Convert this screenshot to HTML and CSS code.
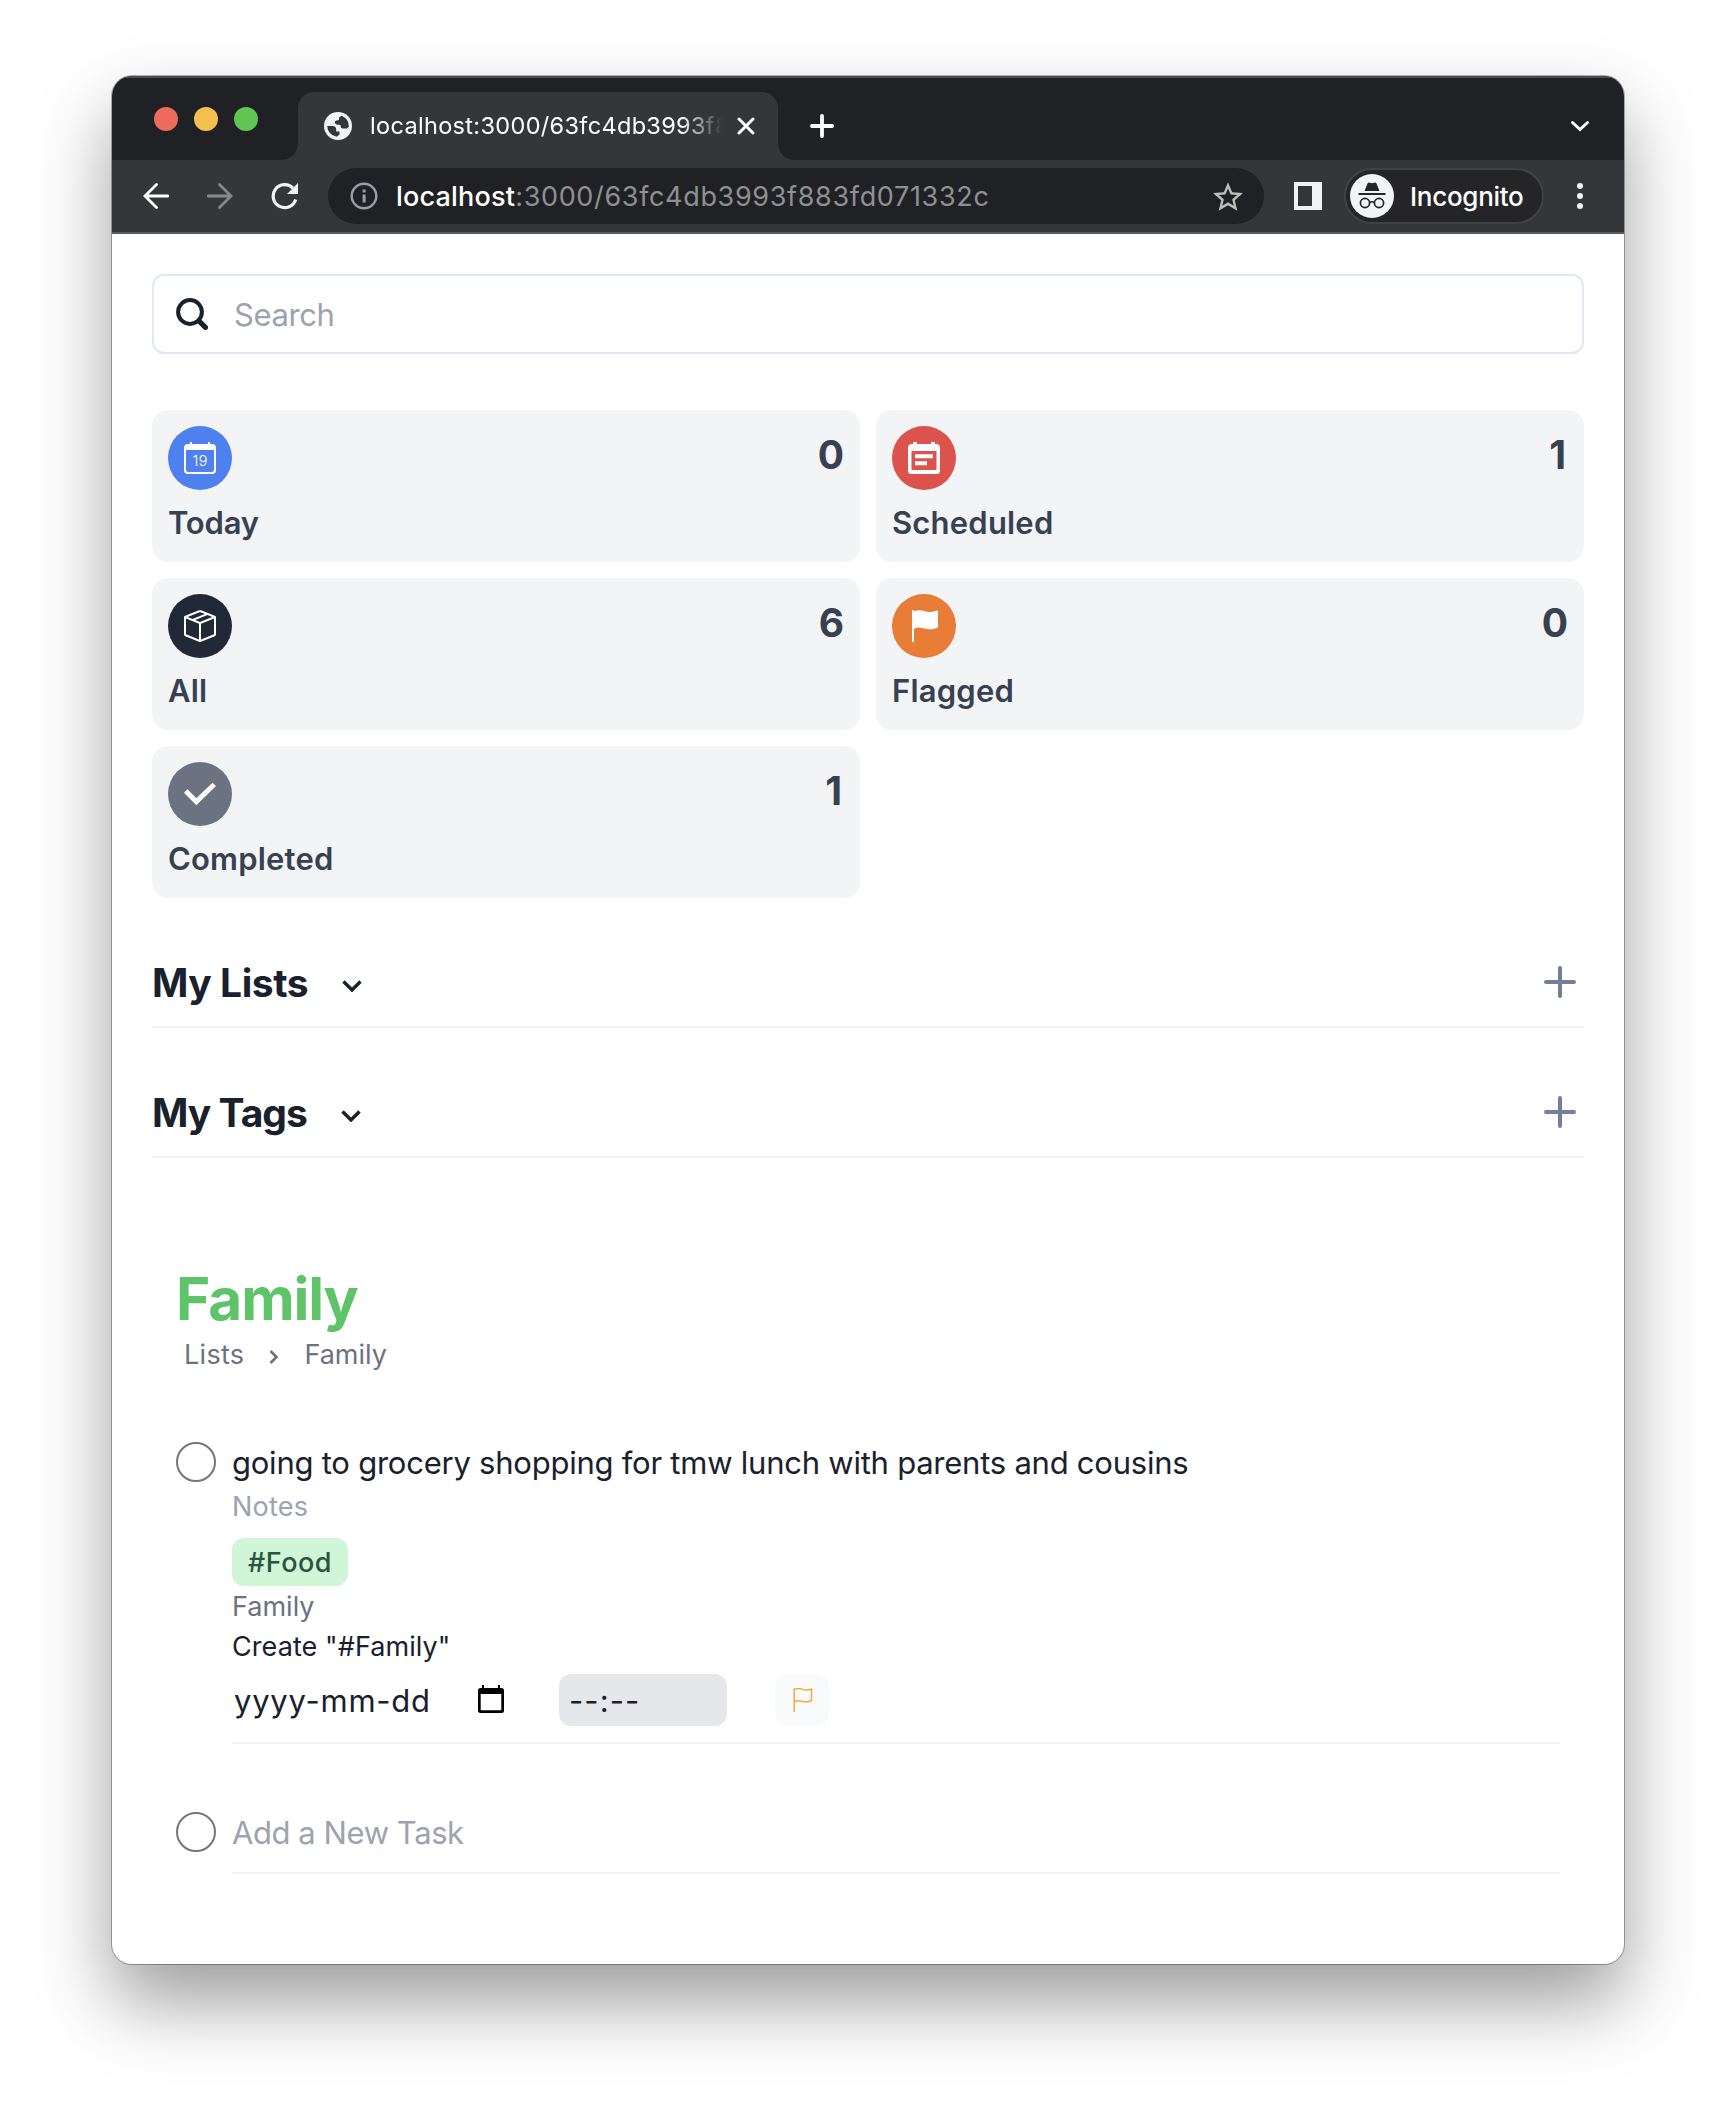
FILE: index.html
```html
<!DOCTYPE html>
<html lang="en">
<head>
<meta charset="utf-8">
<title>Reminders</title>
<link rel="stylesheet" href="styles.css">
</head>
<body>
<div class="window">
  <div class="tabstrip">
    <div class="lights"><i class="light red"></i><i class="light yellow"></i><i class="light green"></i></div>
    <div class="tab">
      <svg class="globe" viewBox="0 0 28 28"><circle cx="14" cy="14" r="14" fill="#f1f3f4"/><path fill="#35363a" d="M3.200 14H8.500Q12.200 14 12.200 17.500V19.500H15.500V22.500L12.500 24.700A10.900 10.900 0 0 1 3.200 14ZM17.500 3.700A10.900 10.900 0 0 1 24.800 15L22.500 16.500H19Q16.500 16.500 16.500 13L12.500 12.500Q10 11 11.500 8.800L15 8V5.500Z"/></svg>
      <div class="tab-title"><span>localhost:3000/63fc4db3993f8</span></div>
      <svg class="close" viewBox="0 0 18 18"><path d="M2 2l14 14M16 2L2 16"/></svg>
    </div>
    <svg class="newtab" viewBox="0 0 24 24"><path d="M12 2v20M2 12h20"/></svg>
    <svg class="tabmenu" viewBox="0 0 20 12"><path d="M2.500 2.500L10 9.500l7.500-7"/></svg>
  </div>
  <div class="toolbar">
    <svg class="nav back" viewBox="0 0 26 26"><path d="M25 13H2M13.500 1.500L2 13l11.500 11.500"/></svg>
    <svg class="nav forward" viewBox="0 0 26 26"><path d="M1 13h23M12.500 1.500L24 13 12.500 24.500"/></svg>
    <svg class="reload" viewBox="0 0 28 28"><path fill="none" stroke="#f1f3f4" stroke-width="3.200" d="M24.700 17.500A11.500 11.500 0 1 1 22 6.200"/><path fill="#f1f3f4" d="M27 1v11H16z"/></svg>
    <div class="omnibox">
      <svg class="info" viewBox="0 0 28 28"><circle cx="14" cy="14" r="12.300" fill="none" stroke="#9aa0a6" stroke-width="2.400"/><path fill="#9aa0a6" d="M12.600 7.500h3v3h-3zM12.600 12.500h3v8h-3z"/></svg>
      <div class="url"><span class="host">localhost</span><span class="path">:3000/63fc4db3993f883fd071332c</span></div>
      <svg class="star" viewBox="2 2 20 19"><path fill="#bdbdbd" d="M22 9.240l-7.190-.620L12 2 9.190 8.630 2 9.240l5.460 4.730L5.820 21 12 17.270 18.180 21l-1.630-7.030L22 9.240zM12 15.400l-3.760 2.270 1-4.280-3.320-2.880 4.380-.38L12 6.100l1.710 4.040 4.380.38-3.320 2.880 1 4.280L12 15.400z"/></svg>
    </div>
    <svg class="panel" viewBox="0 0 28 28"><path fill="#f1f3f4" fill-rule="evenodd" d="M0 0h28v28H0zM4 4v20h14V4z"/></svg>
    <div class="incognito">
      <svg class="avatar" viewBox="0 0 44 44"><circle cx="22" cy="22" r="22" fill="#f1f3f4"/><path fill="#252528" d="M14.500 17l3-7.500c.5-1 1.200-1.100 2-.8 1.600.6 3.400.6 5 0 .8-.3 1.500-.2 2 .8l3 7.500zM8.500 19h27v2h-27z"/><g fill="none" stroke="#252528" stroke-width="1.700"><circle cx="15" cy="29" r="4.600"/><circle cx="29" cy="29" r="4.600"/><path d="M19.500 28.500q2.500-1.500 5 0"/></g></svg>
      <span>Incognito</span>
    </div>
    <svg class="dots" viewBox="0 0 6 28"><circle cx="3" cy="4" r="3"/><circle cx="3" cy="14" r="3"/><circle cx="3" cy="24" r="3"/></svg>
  </div>
  <main class="page">
    <div class="search">
      <svg viewBox="0 0 32 32"><circle cx="14" cy="14" r="11.900" fill="none" stroke="#1a202c" stroke-width="4"/><path d="M23 23l6.400 6.400" stroke="#1a202c" stroke-width="5.200" stroke-linecap="round"/></svg>
      <span>Search</span>
    </div>
    <div class="cards">
      <div class="card">
        <div class="card-top"><div class="badge blue"><svg viewBox="0 0 32 32"><path fill="#fff" fill-rule="evenodd" d="M6 0h2v2h16V0h2v2h2a4 4 0 0 1 4 4v22a4 4 0 0 1-4 4H4a4 4 0 0 1-4-4V6a4 4 0 0 1 4-4h2zM2 8v19.500A2.500 2.500 0 0 0 4.500 30h23a2.500 2.500 0 0 0 2.500-2.500V8z"/><text x="16" y="23.500" text-anchor="middle" class="date-num">19</text></svg></div><span class="count">0</span></div>
        <div class="label today">Today</div>
      </div>
      <div class="card">
        <div class="card-top"><div class="badge red-bg"><svg viewBox="0 0 32 32"><path fill="#fff" fill-rule="evenodd" d="M5 0h4v2h14V0h4v2h1a4 4 0 0 1 4 4v22.500a3.500 3.500 0 0 1-3.500 3.500h-25A3.500 3.500 0 0 1 0 28.500V6a4 4 0 0 1 4-4h1zM3.500 9v19h25V9z"/><path fill="#fff" d="M7 12.300h18v4H7zM7 19.300h12v4H7z"/></svg></div><span class="count one">1</span></div>
        <div class="label">Scheduled</div>
      </div>
      <div class="card">
        <div class="card-top"><div class="badge dark"><svg viewBox="0 0 16 16"><path fill="#fff" d="M8.186 1.113a.5.5 0 0 0-.372 0L1.846 3.500l2.404.961L10.404 2l-2.218-.887zm3.564 1.426L5.596 5 8 5.961 14.154 3.500l-2.404-.961zm3.250 1.700-6.500 2.600v7.922l6.500-2.600V4.240zM7.500 14.762V6.838L1 4.239v7.923l6.500 2.600zM7.443.184a1.500 1.500 0 0 1 1.114 0l7.129 2.852A.5.5 0 0 1 16 3.500v8.662a1 1 0 0 1-.629.928l-7.185 2.874a.5.5 0 0 1-.372 0L.63 13.090a1 1 0 0 1-.63-.928V3.500a.5.5 0 0 1 .314-.464L7.443.184z"/></svg></div><span class="count">6</span></div>
        <div class="label">All</div>
      </div>
      <div class="card">
        <div class="card-top"><div class="badge orange"><svg viewBox="0 0 32 32"><path fill="#fff" d="M4 .2h2v1C10-.3 13-.1 17 1.300c4 1.400 8 .7 13-1.100v17.300c-4 2-9.500 2.500-14.500.8-3.500-1.200-6.500-.8-9.500.4V32H4z"/></svg></div><span class="count">0</span></div>
        <div class="label">Flagged</div>
      </div>
      <div class="card">
        <div class="card-top"><div class="badge gray"><svg viewBox="0 0 32 32"><path fill="#fff" d="M0 14.700l3.500-3.400 8.800 9L28.500 4.700 32 8 12.300 27.300z"/></svg></div><span class="count one">1</span></div>
        <div class="label">Completed</div>
      </div>
    </div>
    <section class="group">
      <h2>My Lists</h2>
      <svg class="chev" viewBox="0 0 20 12"><path d="M1.500 1.500L10 10l8.500-8.500"/></svg>
      <svg class="plus" viewBox="0 0 32 32"><path d="M16 2v28M2 16h28"/></svg>
    </section>
    <section class="group tags">
      <h2>My Tags</h2>
      <svg class="chev" viewBox="0 0 20 12"><path d="M1.500 1.500L10 10l8.500-8.500"/></svg>
      <svg class="plus" viewBox="0 0 32 32"><path d="M16 2v28M2 16h28"/></svg>
    </section>
    <div class="list">
      <h1>Family</h1>
      <nav class="crumbs"><span class="crumb-root">Lists</span><svg viewBox="0 0 10 14"><path d="M1.500 1l6 6-6 6"/></svg><span>Family</span></nav>
      <div class="task">
        <span class="radio"></span>
        <div class="task-body">
          <div class="task-title">going to grocery shopping for tmw lunch with parents and cousins</div>
          <div class="small muted notes">Notes</div>
          <div class="tag">#Food</div>
          <div class="small tag-input">Family</div>
          <div class="small create">Create "#Family"</div>
          <div class="when">
            <span class="date">yyyy-mm-dd</span>
            <svg class="cal" viewBox="0 0 26 28"><path fill-rule="evenodd" d="M4 0h2v3h14V0h2v3h1.500A2.500 2.500 0 0 1 26 5.500v20a2.500 2.500 0 0 1-2.500 2.500h-21A2.500 2.500 0 0 1 0 25.500v-20A2.500 2.500 0 0 1 2.500 3H4zM2.700 9v16.300h20.600V9z"/></svg>
            <span class="time">--:--</span>
            <span class="flag"><svg viewBox="0 0 20 24"><path fill="none" stroke="#f0ab3c" stroke-width="1.500" d="M1.200 24V1.200c3-1 5.500-.8 8.300.2s5.500.8 9-.4v11.500c-3 1.500-6 1.700-9.300.7-3-.9-5-.6-8 .3"/></svg></span>
          </div>
        </div>
      </div>
      <div class="task new">
        <span class="radio"></span>
        <div class="task-body"><div class="task-title placeholder muted">Add a New Task</div></div>
      </div>
    </div>
  </main>
</div>
</body>
</html>
```
FILE: styles.css
```css
* { box-sizing: border-box; }
html, body { margin: 0; }
body {
  width: 1736px;
  height: 2112px;
  padding: 76px 112px 148px;
  background: #fff;
  font-family: Inter, "Liberation Sans", sans-serif;
  color: #1a202c;
  overflow: hidden;
}
svg { display: block; flex: none; }
h1, h2 { margin: 0; }

.window {
  height: 1888px;
  display: flex;
  flex-direction: column;
  border-radius: 20px;
  overflow: hidden;
  background: #fff;
  box-shadow: 0 0 0 1px rgba(0, 0, 0, .3), 0 38px 76px rgba(0, 0, 0, .39);
}

/* Browser chrome */
.tabstrip {
  display: flex;
  align-items: center;
  height: 84px;
  padding: 14px 34px 0 42px;
  background: #202124;
  border-top: 2px solid #4b4c4f;
}
.lights { display: flex; gap: 16px; width: 144px; padding-bottom: 14px; }
.light { width: 24px; height: 24px; border-radius: 50%; }
.red { background: #ed6a5e; }
.yellow { background: #f5bf4f; }
.green { background: #61c554; }
.tab {
  position: relative;
  display: flex;
  align-items: center;
  width: 480px;
  height: 68px;
  padding: 0 23px 0 26px;
  border-radius: 16px 16px 0 0;
  background: #35363a;
}
.tab::before, .tab::after {
  content: "";
  position: absolute;
  bottom: 0;
  width: 16px;
  height: 16px;
}
.tab::before { left: -16px; background: radial-gradient(circle at 0 0, transparent 15.500px, #35363a 16px); }
.tab::after { right: -16px; background: radial-gradient(circle at 100% 0, transparent 15.500px, #35363a 16px); }
.globe { width: 28px; height: 28px; }
.tab-title {
  width: 362px;
  margin-left: 18px;
  white-space: nowrap;
  font-size: 23.500px;
  line-height: 34px;
  letter-spacing: .33px;
  color: #fff;
  -webkit-mask-image: linear-gradient(90deg, #000 310px, transparent 352px);
  mask-image: linear-gradient(90deg, #000 310px, transparent 352px);
}
.close { width: 18px; height: 18px; margin-left: auto; }
.close path, .newtab path, .tabmenu path { fill: none; stroke: #fff; stroke-width: 3; stroke-linecap: round; }
.newtab { width: 24px; height: 24px; margin-left: 32px; }
.newtab path { stroke-width: 3.800; }
.tabmenu { width: 20px; height: 12px; margin-left: auto; }
.toolbar {
  display: flex;
  align-items: center;
  height: 74px;
  padding: 0 41px 0 31px;
  background: #35363a;
  border-bottom: 2px solid #5a5b5f;
}
.nav { width: 26px; height: 26px; margin-right: 38px; }
.nav path { fill: none; stroke: #fff; stroke-width: 2.800; stroke-linecap: round; }
.forward path { stroke: #87888a; }
.reload { width: 28px; height: 28px; }
.omnibox {
  display: flex;
  align-items: center;
  width: 936px;
  height: 56px;
  margin-left: 29px;
  padding: 0 21px 0 22px;
  border-radius: 28px;
  background: #202124;
}
.info { width: 28px; height: 28px; }
.url { margin-left: 18px; padding-top: 1px; white-space: nowrap; font-size: 27px; line-height: 40px; color: #8e9093; letter-spacing: .66px; }
.host { color: #fff; font-weight: 450; letter-spacing: .2px; }
.star { width: 30px; height: 29px; margin-left: auto; }
.panel { width: 28px; height: 28px; margin-left: 30px; }
.incognito {
  display: flex;
  align-items: center;
  width: 200px;
  height: 56px;
  margin-left: 22px;
  padding-left: 4px;
  border: 2px solid #414246;
  border-radius: 28px;
  background: #252528;
  color: #fff;
  font-size: 26px;
  font-weight: 450;
  letter-spacing: -.28px;
}
.avatar { width: 44px; height: 44px; margin-right: 16px; }
.dots { width: 6px; height: 28px; margin-left: auto; fill: #f1f3f4; }

/* Page */
.page { flex: 1; padding: 40px; }
.search {
  display: flex;
  align-items: center;
  height: 80px;
  padding-left: 22px;
  border: 2px solid #e2e8f0;
  border-radius: 12px;
  color: #9ca3af;
  font-size: 31px;
  letter-spacing: -.4px;
}
.search svg { width: 32px; height: 32px; margin-right: 26px; }
.cards { display: grid; grid-template-columns: 1fr 1fr; gap: 16px; margin-top: 56px; }
.card { height: 152px; padding: 16px; border-radius: 16px; background: #f3f4f6; color: #374151; }
.card-top { display: flex; justify-content: space-between; height: 64px; }
.badge { display: flex; align-items: center; justify-content: center; width: 64px; height: 64px; border-radius: 50%; }
.badge svg { width: 32px; height: 32px; }
.blue { background: #4e80ee; }
.red-bg { background: #dc524d; }
.dark { background: #222936; }
.orange { background: #e87d37; }
.gray { background: #6b7280; }
.date-num { font-size: 15px; font-weight: 350; fill: #fff; }
.count { font-size: 39px; font-weight: 700; line-height: 58px; }
.count.one { margin-right: 2px; }
.label { margin-top: 8px; font-size: 31px; font-weight: 600; line-height: 50px; letter-spacing: .2px; }
.label.today { letter-spacing: -.2px; }
.group {
  display: flex;
  align-items: center;
  height: 130px;
  padding: 60px 8px 20px 0;
  border-bottom: 2px solid #edf2f7;
}
.group h2 { font-size: 39px; line-height: 48px; padding-top: 2px; font-weight: 700; letter-spacing: -.45px; }
.group.tags h2 { letter-spacing: -.98px; }
.chev { width: 20px; height: 12px; margin: 8px 0 0 34px; }
.chev path { fill: none; stroke: #1a202c; stroke-width: 3.400; }
.plus { width: 32px; height: 32px; margin-left: auto; }
.plus path { stroke: #718096; stroke-width: 4; stroke-linecap: round; }

.list { padding: 111px 24px 0; }
.list h1 { font-size: 58.500px; line-height: 60px; font-weight: 700; letter-spacing: -1.100px; color: #5fc36a; }
.crumbs { display: flex; align-items: center; height: 42px; margin-top: 4px; padding-left: 8px; font-size: 27px; color: #6b7280; }
.crumb-root { letter-spacing: .3px; }
.crumbs svg { width: 10px; height: 14px; margin: 6px 25px 0 25px; }
.crumbs path { fill: none; stroke: #6b7280; stroke-width: 2.600; }
.task { display: flex; gap: 16px; margin-top: 65px; }
.task.new { margin-top: 66px; }
.radio { width: 40px; height: 40px; margin-top: 2px; border: 2px solid #767676; border-radius: 50%; flex: none; }
.task-body { flex: 1; padding-bottom: 16px; border-bottom: 2px solid #edf2f7; white-space: nowrap; }
.task-title { font-size: 31px; line-height: 46px; letter-spacing: -.238px; }
.task-title.placeholder { letter-spacing: -.43px; }
.small { height: 40px; font-size: 27px; line-height: 42px; }
.muted { color: #9ca3af; }
.notes { letter-spacing: .25px; }
.tag-input { color: #6b7280; }
.create { letter-spacing: .08px; }
.tag {
  width: 116px;
  height: 48px;
  margin-top: 12px;
  padding-left: 16px;
  border-radius: 12px;
  background: #d0f5d7;
  color: #2a5440;
  font-size: 27px;
  line-height: 50px;
  letter-spacing: .5px;
  font-weight: 500;
}
.when { display: flex; align-items: center; height: 52px; margin-top: 8px; font-size: 31px; letter-spacing: .75px; }
.date { width: 246px; padding-left: 2px; }
.cal { width: 26px; height: 28px; margin: 0 55px 2px 0; }
.time { width: 168px; height: 52px; padding-left: 10px; border-radius: 12px; background: #e5e7eb; line-height: 54px; letter-spacing: 1.100px; }
.flag { display: flex; align-items: center; justify-content: center; width: 54px; height: 52px; margin-left: 48px; padding-left: 2px; border-radius: 12px; background: #f9fafb; }
.flag svg { width: 20px; height: 24px; }
```
